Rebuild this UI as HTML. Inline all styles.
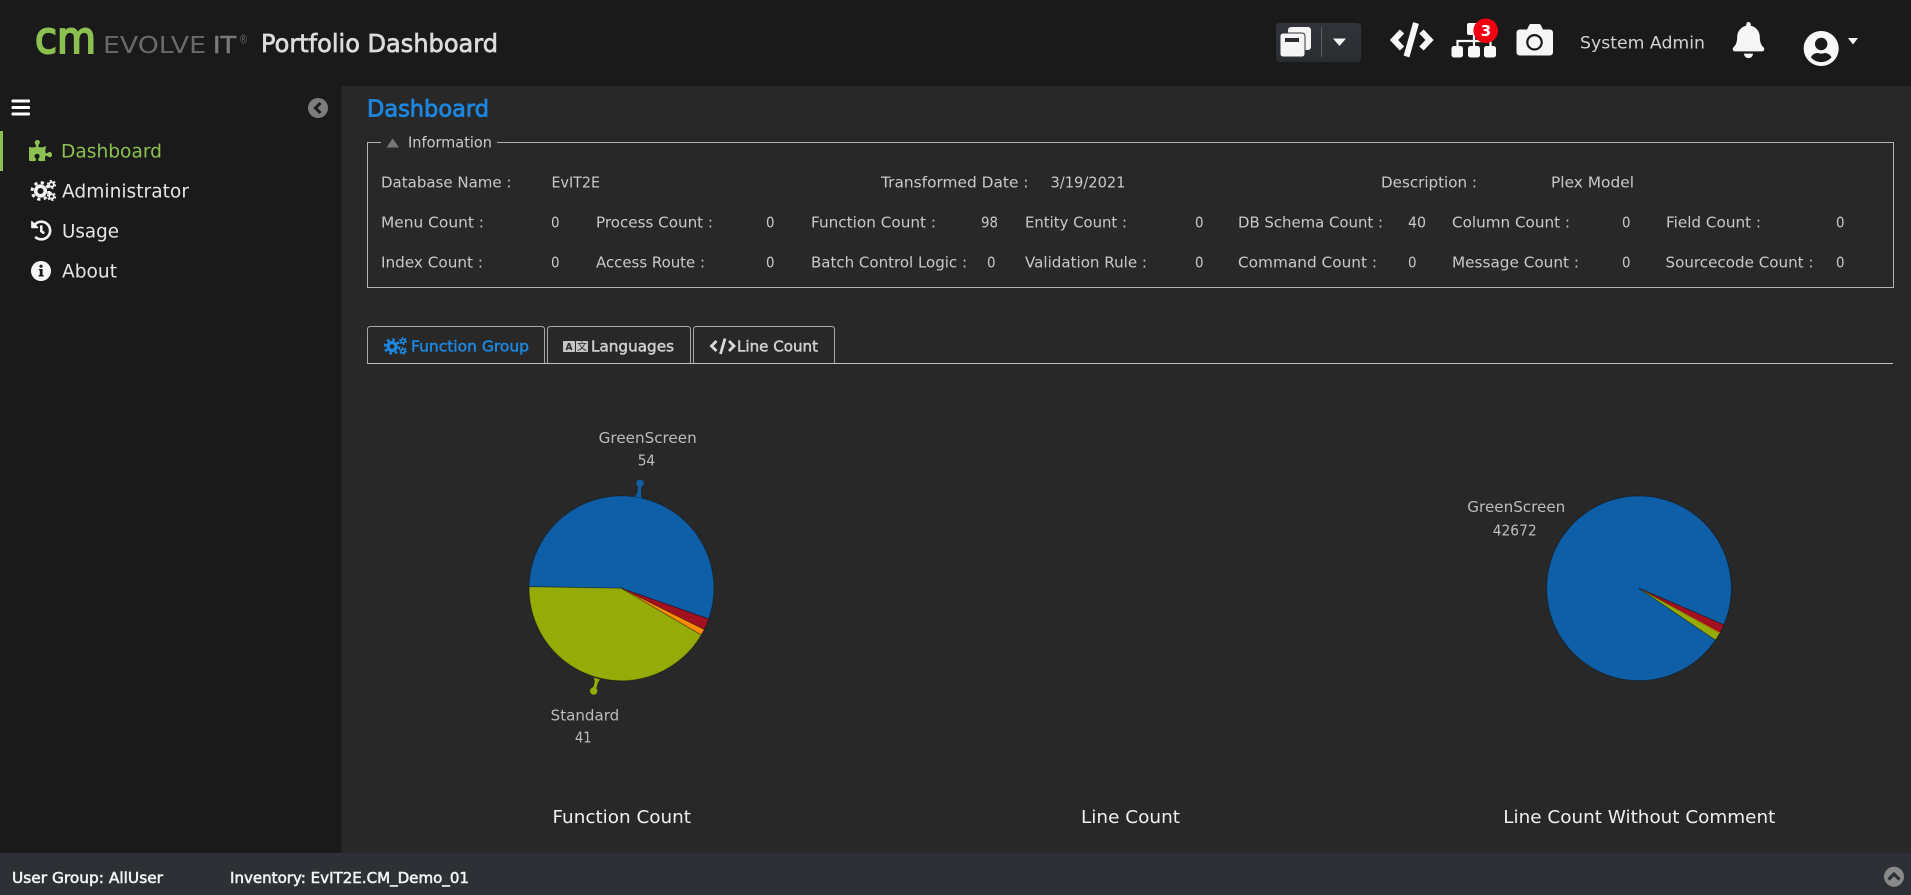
<!DOCTYPE html>
<html><head><meta charset="utf-8"><title>Portfolio Dashboard</title>
<style>
html,body{margin:0;padding:0;background:#282828;overflow:hidden}
svg{display:block}
text{font-family:"DejaVu Sans","Liberation Sans",sans-serif;transform:translateY(-.5px)}
.m{font-size:19px;fill:#e6e6e6}
.i{font-size:15px;fill:#c9c9c9}
.l{font-size:15px;fill:#bdbdbd}
.t{font-size:17.5px;fill:#f0f0f0}
.f{font-size:15px;fill:#f2f2f2;stroke:#f2f2f2;stroke-width:.55}
.tb{font-size:15.5px;stroke-width:.5}
</style></head><body>
<svg xmlns="http://www.w3.org/2000/svg" width="1911" height="895" viewBox="0 0 1911 895">
<rect width="1911" height="895" fill="#282828"/>
<rect width="1911" height="86" fill="#1a1a1a"/>
<rect y="86" width="341" height="767" fill="#1a1a1a"/>
<rect x="341" y="86" width="1" height="767" fill="#232323"/>
<rect y="853" width="1911" height="42" fill="#2d3135"/>

<!-- logo -->
<text x="35" y="53.500" font-size="44" fill="#8cc152" stroke="#8cc152" stroke-width="2" textLength="61" lengthAdjust="spacingAndGlyphs">cm</text>
<text x="103" y="53.500" font-size="23" fill="#6a6a6a" textLength="103" lengthAdjust="spacingAndGlyphs">EVOLVE</text>
<text x="213" y="53.500" font-size="23" fill="#7a7a7a" stroke="#7a7a7a" stroke-width=".6" textLength="23" lengthAdjust="spacingAndGlyphs">IT</text>
<text x="239" y="44" font-size="12" fill="#6a6a6a" textLength="9" lengthAdjust="spacingAndGlyphs">®</text>
<text x="261" y="52.500" font-size="25" fill="#dcdcdc" stroke="#dcdcdc" stroke-width=".7" textLength="237" lengthAdjust="spacingAndGlyphs">Portfolio Dashboard</text>

<!-- header right -->
<defs><linearGradient id="bg" x1="0" y1="0" x2="0" y2="1"><stop offset="0" stop-color="#30343a"/><stop offset="1" stop-color="#2a2d30"/></linearGradient></defs>
<rect x="1276" y="23" width="85" height="39" rx="4" fill="url(#bg)"/>
<rect x="1288" y="27" width="23" height="23" rx="3" fill="#f5f5f5"/>
<rect x="1280" y="33" width="25" height="24" rx="3" fill="#f5f5f5" stroke="#30343a" stroke-width="1"/>
<rect x="1285" y="38" width="14" height="4" fill="#2a2d30"/>
<rect x="1321" y="27" width="1" height="30" fill="#5a5d60"/>
<path d="M1333 38.500H1346L1339.500 46Z" fill="#f5f5f5"/>

<g fill="none" stroke="#f8f8f8" stroke-width="6" stroke-linejoin="miter">
<path d="M1402 31.500L1394 40L1402 48.500"/>
<path d="M1421.500 31.500L1429.500 40L1421.500 48.500"/>
<path d="M1416 23L1406.500 56.500"/>
</g>

<g fill="#f8f8f8">
<rect x="1467" y="23" width="14" height="12" rx="2"/>
<rect x="1451.500" y="46" width="11.500" height="11.500" rx="2.500"/>
<rect x="1468" y="46" width="12" height="11.500" rx="2.500"/>
<rect x="1484" y="46" width="12" height="11.500" rx="2.500"/>
</g>
<path d="M1457.500 46V41H1490.500V46M1474 34V46" fill="none" stroke="#f8f8f8" stroke-width="2.200"/>
<circle cx="1485.700" cy="30.700" r="12.300" fill="#f2000f"/>
<text x="1480.800" y="36.500" font-size="15" font-weight="bold" fill="#fff">3</text>

<path d="M1520 29.500H1527L1529 25.500Q1529.500 24 1531 24H1539Q1540.500 24 1541 25.500L1543 29.500H1549.500Q1553 29.500 1553 33V52Q1553 55.500 1549.500 55.500H1520Q1516.500 55.500 1516.500 52V33Q1516.500 29.500 1520 29.500Z" fill="#f6f6f6"/>
<circle cx="1534.500" cy="42.300" r="7.200" fill="#f6f6f6" stroke="#1a1a1a" stroke-width="2.200"/>

<text x="1580" y="49" font-size="17" fill="#d2d2d2" textLength="125" lengthAdjust="spacingAndGlyphs">System Admin</text>

<path transform="translate(1732.700 22) scale(.0705)" fill="#f6f6f6" d="M224 512c35.32 0 63.97-28.65 63.97-64H160.03c0 35.35 28.65 64 63.97 64zm215.39-149.71c-19.32-20.76-55.47-51.99-55.47-154.29 0-77.7-54.48-139.9-127.94-155.16V32c0-17.67-14.32-32-31.98-32s-31.98 14.33-31.98 32v20.84C118.56 68.1 64.08 130.3 64.08 208c0 102.3-36.15 133.53-55.47 154.29-6 6.45-8.66 14.16-8.61 21.71.11 16.4 12.98 32 32.1 32h383.8c19.12 0 32-15.6 32.1-32 .05-7.55-2.61-15.27-8.61-21.71z"/>
<path transform="translate(1803.700 31) scale(.0706) translate(0 -8)" fill="#f8f8f8" d="M248 8C111 8 0 119 0 256s111 248 248 248 248-111 248-248S385 8 248 8zm0 96c48.6 0 88 39.4 88 88s-39.4 88-88 88-88-39.4-88-88 39.4-88 88-88zm0 344c-58.7 0-111.3-26.6-146.5-68.2 18.8-35.4 55.6-59.8 98.5-59.8 2.4 0 4.8.4 7.1 1.1 13 4.2 26.6 6.9 40.9 6.9 14.3 0 28-2.7 40.9-6.9 2.3-.7 4.7-1.1 7.1-1.1 42.9 0 79.7 24.4 98.5 59.8C359.3 421.4 306.7 448 248 448z"/>
<path d="M1848 38H1858L1853 44.500Z" fill="#f5f5f5"/>

<!-- sidebar -->
<g fill="#fff"><rect x="11.500" y="99.500" width="18.500" height="3" rx="1"/><rect x="11.500" y="106" width="18.500" height="3" rx="1"/><rect x="11.500" y="112.500" width="18.500" height="3" rx="1"/></g>
<circle cx="318" cy="108" r="10" fill="#7c7c7c"/>
<path d="M320.500 103L315.500 108L320.500 113" fill="none" stroke="#1a1a1a" stroke-width="3"/>
<rect y="131" width="3" height="40" fill="#8cc152"/>
<path transform="translate(29 140) scale(.04 .0415)" fill="#8cc152" d="M519.442 288.651c-41.519 0-59.5 31.593-82.058 31.593C377.409 320.244 432 144 432 144s-196.288 80-196.288-3.297c0-35.827 36.288-46.25 36.288-85.985C272 19.216 243.885 0 210.539 0c-34.654 0-66.366 18.891-66.366 56.346 0 41.364 31.711 59.277 31.711 81.75C175.885 207.719 0 166.758 0 166.758v333.237s178.635 41.047 178.635-28.662c0-22.473-40-40.107-40-81.471 0-37.456 29.25-56.346 63.577-56.346 33.673 0 61.788 19.216 61.788 54.717 0 39.735-36.288 50.158-36.288 85.985 0 60.803 129.675 25.73 181.23 25.73 0 0-34.725-120.101 25.827-120.101 35.962 0 46.423 36.152 86.308 36.152C556.712 416 576 387.99 576 354.443c0-34.199-18.962-65.792-56.558-65.792z"/>
<text class="m" x="61" y="158" style="fill:#8cc152" textLength="101" lengthAdjust="spacingAndGlyphs">Dashboard</text>

<g transform="translate(30 180)" fill="none" stroke="#f2f2f2">
<circle cx="10.500" cy="11" r="4.800" stroke-width="3.600"/><circle cx="10.500" cy="11" r="8.400" stroke-width="3" stroke-dasharray="3.200 3.400"/>
<circle cx="21.500" cy="4.500" r="2.300" stroke-width="1.800"/><circle cx="21.500" cy="4.500" r="3.800" stroke-width="1.600" stroke-dasharray="2 2"/>
<circle cx="21.500" cy="16.500" r="2.300" stroke-width="1.800"/><circle cx="21.500" cy="16.500" r="3.800" stroke-width="1.600" stroke-dasharray="2 2"/>
</g>
<text class="m" x="62" y="198" textLength="127" lengthAdjust="spacingAndGlyphs">Administrator</text>

<path transform="translate(30.800 220) scale(.041)" fill="#f2f2f2" d="M504 255.531c.253 136.64-111.18 248.372-247.82 248.468-59.015.042-113.223-20.53-155.822-54.911-11.077-8.94-11.905-25.541-1.839-35.607l11.267-11.267c8.609-8.609 22.353-9.551 31.891-1.984C173.062 425.135 212.781 440 256 440c101.705 0 184-82.311 184-184 0-101.705-82.311-184-184-184-48.814 0-93.149 18.969-126.068 49.932l50.754 50.754c10.08 10.08 2.941 27.314-11.313 27.314H24c-8.837 0-16-7.163-16-16V38.627c0-14.254 17.234-21.393 27.314-11.314l49.372 49.372C129.209 34.136 189.552 8 256 8c136.81 0 247.747 110.78 248 247.531zm-180.912 78.784l9.823-12.63c8.138-10.463 6.253-25.542-4.21-33.679L288 256.349V152c0-13.255-10.745-24-24-24h-16c-13.255 0-24 10.745-24 24v135.651l65.409 50.874c10.463 8.137 25.541 6.253 33.679-4.21z"/>
<text class="m" x="62" y="238" textLength="57" lengthAdjust="spacingAndGlyphs">Usage</text>

<circle cx="41" cy="271" r="10" fill="#f6f6f6"/>
<rect x="39.800" y="269.500" width="2.800" height="6.500" fill="#1a1a1a"/><rect x="38.600" y="275" width="5" height="1.500" fill="#1a1a1a"/><rect x="38.800" y="269" width="3.800" height="1.300" fill="#1a1a1a"/><circle cx="41" cy="266.200" r="1.600" fill="#1a1a1a"/>
<text class="m" x="62" y="278" textLength="55" lengthAdjust="spacingAndGlyphs">About</text>

<!-- title -->
<text x="367" y="117" font-size="23.500" fill="#1c87e0" stroke="#1c87e0" stroke-width=".8" textLength="122" lengthAdjust="spacingAndGlyphs">Dashboard</text>

<!-- information -->
<path d="M381 142.500H367.500V287.500H1893.500V142.500H497" fill="none" stroke="#b4b4b4"/>
<path d="M386.500 147.500L392.700 138.500L399 147.500Z" fill="#777"/>
<text class="i" x="408" y="148" textLength="84" lengthAdjust="spacingAndGlyphs">Information</text>

<text class="i" x="381" y="188" textLength="130.500" lengthAdjust="spacingAndGlyphs">Database Name :</text>
<text class="i" x="551.500" y="188" textLength="48.500" lengthAdjust="spacingAndGlyphs">EvIT2E</text>
<text class="i" x="881" y="188" textLength="147.500" lengthAdjust="spacingAndGlyphs">Transformed Date :</text>
<text class="i" x="1050.500" y="188" textLength="75" lengthAdjust="spacingAndGlyphs">3/19/2021</text>
<text class="i" x="1381" y="188" textLength="96" lengthAdjust="spacingAndGlyphs">Description :</text>
<text class="i" x="1551" y="188" textLength="83" lengthAdjust="spacingAndGlyphs">Plex Model</text>

<text class="i" x="381" y="228" textLength="103" lengthAdjust="spacingAndGlyphs">Menu Count :</text>
<text class="i" x="551" y="228" textLength="8.500" lengthAdjust="spacingAndGlyphs">0</text>
<text class="i" x="596" y="228" textLength="117" lengthAdjust="spacingAndGlyphs">Process Count :</text>
<text class="i" x="766" y="228" textLength="8.500" lengthAdjust="spacingAndGlyphs">0</text>
<text class="i" x="811" y="228" textLength="125" lengthAdjust="spacingAndGlyphs">Function Count :</text>
<text class="i" x="981" y="228" textLength="17" lengthAdjust="spacingAndGlyphs">98</text>
<text class="i" x="1025" y="228" textLength="102" lengthAdjust="spacingAndGlyphs">Entity Count :</text>
<text class="i" x="1195" y="228" textLength="8.500" lengthAdjust="spacingAndGlyphs">0</text>
<text class="i" x="1238" y="228" textLength="145" lengthAdjust="spacingAndGlyphs">DB Schema Count :</text>
<text class="i" x="1408" y="228" textLength="18" lengthAdjust="spacingAndGlyphs">40</text>
<text class="i" x="1452" y="228" textLength="118" lengthAdjust="spacingAndGlyphs">Column Count :</text>
<text class="i" x="1622" y="228" textLength="8.500" lengthAdjust="spacingAndGlyphs">0</text>
<text class="i" x="1666" y="228" textLength="95" lengthAdjust="spacingAndGlyphs">Field Count :</text>
<text class="i" x="1836" y="228" textLength="8.500" lengthAdjust="spacingAndGlyphs">0</text>

<text class="i" x="381" y="268" textLength="102" lengthAdjust="spacingAndGlyphs">Index Count :</text>
<text class="i" x="551" y="268" textLength="8.500" lengthAdjust="spacingAndGlyphs">0</text>
<text class="i" x="596" y="268" textLength="109" lengthAdjust="spacingAndGlyphs">Access Route :</text>
<text class="i" x="766" y="268" textLength="8.500" lengthAdjust="spacingAndGlyphs">0</text>
<text class="i" x="811" y="268" textLength="156" lengthAdjust="spacingAndGlyphs">Batch Control Logic :</text>
<text class="i" x="987" y="268" textLength="8.500" lengthAdjust="spacingAndGlyphs">0</text>
<text class="i" x="1025" y="268" textLength="122" lengthAdjust="spacingAndGlyphs">Validation Rule :</text>
<text class="i" x="1195" y="268" textLength="8.500" lengthAdjust="spacingAndGlyphs">0</text>
<text class="i" x="1238" y="268" textLength="139" lengthAdjust="spacingAndGlyphs">Command Count :</text>
<text class="i" x="1408" y="268" textLength="8.500" lengthAdjust="spacingAndGlyphs">0</text>
<text class="i" x="1452" y="268" textLength="127" lengthAdjust="spacingAndGlyphs">Message Count :</text>
<text class="i" x="1622" y="268" textLength="8.500" lengthAdjust="spacingAndGlyphs">0</text>
<text class="i" x="1665.500" y="268" textLength="148" lengthAdjust="spacingAndGlyphs">Sourcecode Count :</text>
<text class="i" x="1836" y="268" textLength="8.500" lengthAdjust="spacingAndGlyphs">0</text>

<!-- tabs -->
<path d="M367.500 363V329.500Q367.500 326.500 370.500 326.500H541.500Q544.500 326.500 544.500 329.500V363M547.500 363V329.500Q547.500 326.500 550.500 326.500H687.500Q690.500 326.500 690.500 329.500V363M693.500 363V329.500Q693.500 326.500 696.500 326.500H831.500Q834.500 326.500 834.500 329.500V363" fill="none" stroke="#a8a8a8"/>
<rect x="367" y="363" width="1526" height="1" fill="#c0c0c0"/>

<g transform="translate(383 337)" fill="none" stroke="#1c87e0">
<circle cx="9" cy="9.500" r="4" stroke-width="3.200"/><circle cx="9" cy="9.500" r="7" stroke-width="2.600" stroke-dasharray="2.700 2.800"/>
<circle cx="20" cy="4" r="1.900" stroke-width="1.600"/><circle cx="20" cy="4" r="3.200" stroke-width="1.400" stroke-dasharray="1.700 1.650"/>
<circle cx="20" cy="14" r="1.900" stroke-width="1.600"/><circle cx="20" cy="14" r="3.200" stroke-width="1.400" stroke-dasharray="1.700 1.650"/>
</g>
<text class="tb" x="411" y="352" fill="#1c87e0" stroke="#1c87e0" textLength="118" lengthAdjust="spacingAndGlyphs">Function Group</text>

<rect x="563" y="341" width="12" height="11" fill="#c4c4c4"/><rect x="576" y="341" width="12" height="11" fill="#c4c4c4"/>
<text x="565.500" y="350.500" font-size="10" font-weight="bold" fill="#282828" textLength="7" lengthAdjust="spacingAndGlyphs">A</text>
<text x="577" y="350.500" font-size="10" fill="#282828" style="font-family:'Liberation Sans','Noto Sans CJK SC',sans-serif">文</text>
<text class="tb" x="591" y="352" fill="#cfcfcf" stroke="#cfcfcf" textLength="83" lengthAdjust="spacingAndGlyphs">Languages</text>

<g fill="none" stroke="#d8d8d8" stroke-width="2.800">
<path d="M716.500 341L711.500 346L716.500 351"/><path d="M729 341L734 346L729 351"/><path d="M725 338.500L720.500 354"/>
</g>
<text class="tb" x="737" y="352" fill="#cfcfcf" stroke="#cfcfcf" textLength="81" lengthAdjust="spacingAndGlyphs">Line Count</text>

<!-- pie 1 -->
<path d="M638.500 483.500L637.500 492Q637 495 634 497L642 499Q640.500 495 641 492L641.500 484.500Z" fill="#0f5fa8"/>
<circle cx="640" cy="483.300" r="3.700" fill="#0f5fa8"/>
<path d="M592.500 690L594.500 683Q595 680 593.500 677.500L600 679.500Q598.500 681 597.500 684L595.500 691Z" fill="#94ab08"/>
<circle cx="593.700" cy="691" r="3.700" fill="#94ab08"/>
<g stroke-width="1" stroke-opacity=".3" stroke="#000">
<path d="M621.500 588.300L529.110 586.690A92.400 92.400 0 1 1 708.650 618.990Z" fill="#0f5fa8"/>
<path d="M621.500 588.300L701.280 634.920A92.400 92.400 0 0 1 529.110 586.690Z" fill="#94ab08"/>
<path d="M621.500 588.300L708.650 618.990A92.400 92.400 0 0 1 704.190 629.530Z" fill="#a31120"/>
<path d="M621.500 588.300L704.190 629.530A92.400 92.400 0 0 1 701.280 634.920Z" fill="#fb8b06"/>
</g>
<text class="l" x="598.700" y="443.500" textLength="98" lengthAdjust="spacingAndGlyphs">GreenScreen</text>
<text class="l" x="637.700" y="466" textLength="17.500" lengthAdjust="spacingAndGlyphs">54</text>
<text class="l" x="550.700" y="721" textLength="68.500" lengthAdjust="spacingAndGlyphs">Standard</text>
<text class="l" x="575" y="743" textLength="16.500" lengthAdjust="spacingAndGlyphs">41</text>

<!-- pie 3 -->
<g stroke-width="1" stroke-opacity=".3" stroke="#000">
<path d="M1639 588.300L1715.430 640.040A92.300 92.300 0 1 1 1723.770 624.800Z" fill="#0f5fa8"/>
<path d="M1639 588.300L1723.770 624.800A92.300 92.300 0 0 1 1720.040 632.480Z" fill="#a31120"/>
<path d="M1639 588.300L1719.650 633.190A92.300 92.300 0 0 1 1715.430 640.040Z" fill="#94ab08"/>
</g>
<path d="M1639 588.300L1720.040 632.480L1719.650 633.190Z" fill="#fb8b06"/>
<text class="l" x="1467.300" y="512.700" textLength="98" lengthAdjust="spacingAndGlyphs">GreenScreen</text>
<text class="l" x="1492.700" y="536" textLength="44" lengthAdjust="spacingAndGlyphs">42672</text>

<!-- titles -->
<text class="t" x="552.500" y="823.500" textLength="138.500" lengthAdjust="spacingAndGlyphs">Function Count</text>
<text class="t" x="1081" y="823.500" textLength="99" lengthAdjust="spacingAndGlyphs">Line Count</text>
<text class="t" x="1503.300" y="823.500" textLength="272" lengthAdjust="spacingAndGlyphs">Line Count Without Comment</text>

<!-- footer -->
<text class="f" x="12" y="883.500" textLength="151" lengthAdjust="spacingAndGlyphs">User Group: AllUser</text>
<text class="f" x="230" y="883.500" textLength="239" lengthAdjust="spacingAndGlyphs">Inventory: EvIT2E.CM_Demo_01</text>
<circle cx="1894" cy="876.700" r="10" fill="#8a8a8a"/>
<path d="M1888.500 879.500L1894 874L1899.500 879.500" fill="none" stroke="#2d3135" stroke-width="3.200"/>
</svg>
</body></html>
